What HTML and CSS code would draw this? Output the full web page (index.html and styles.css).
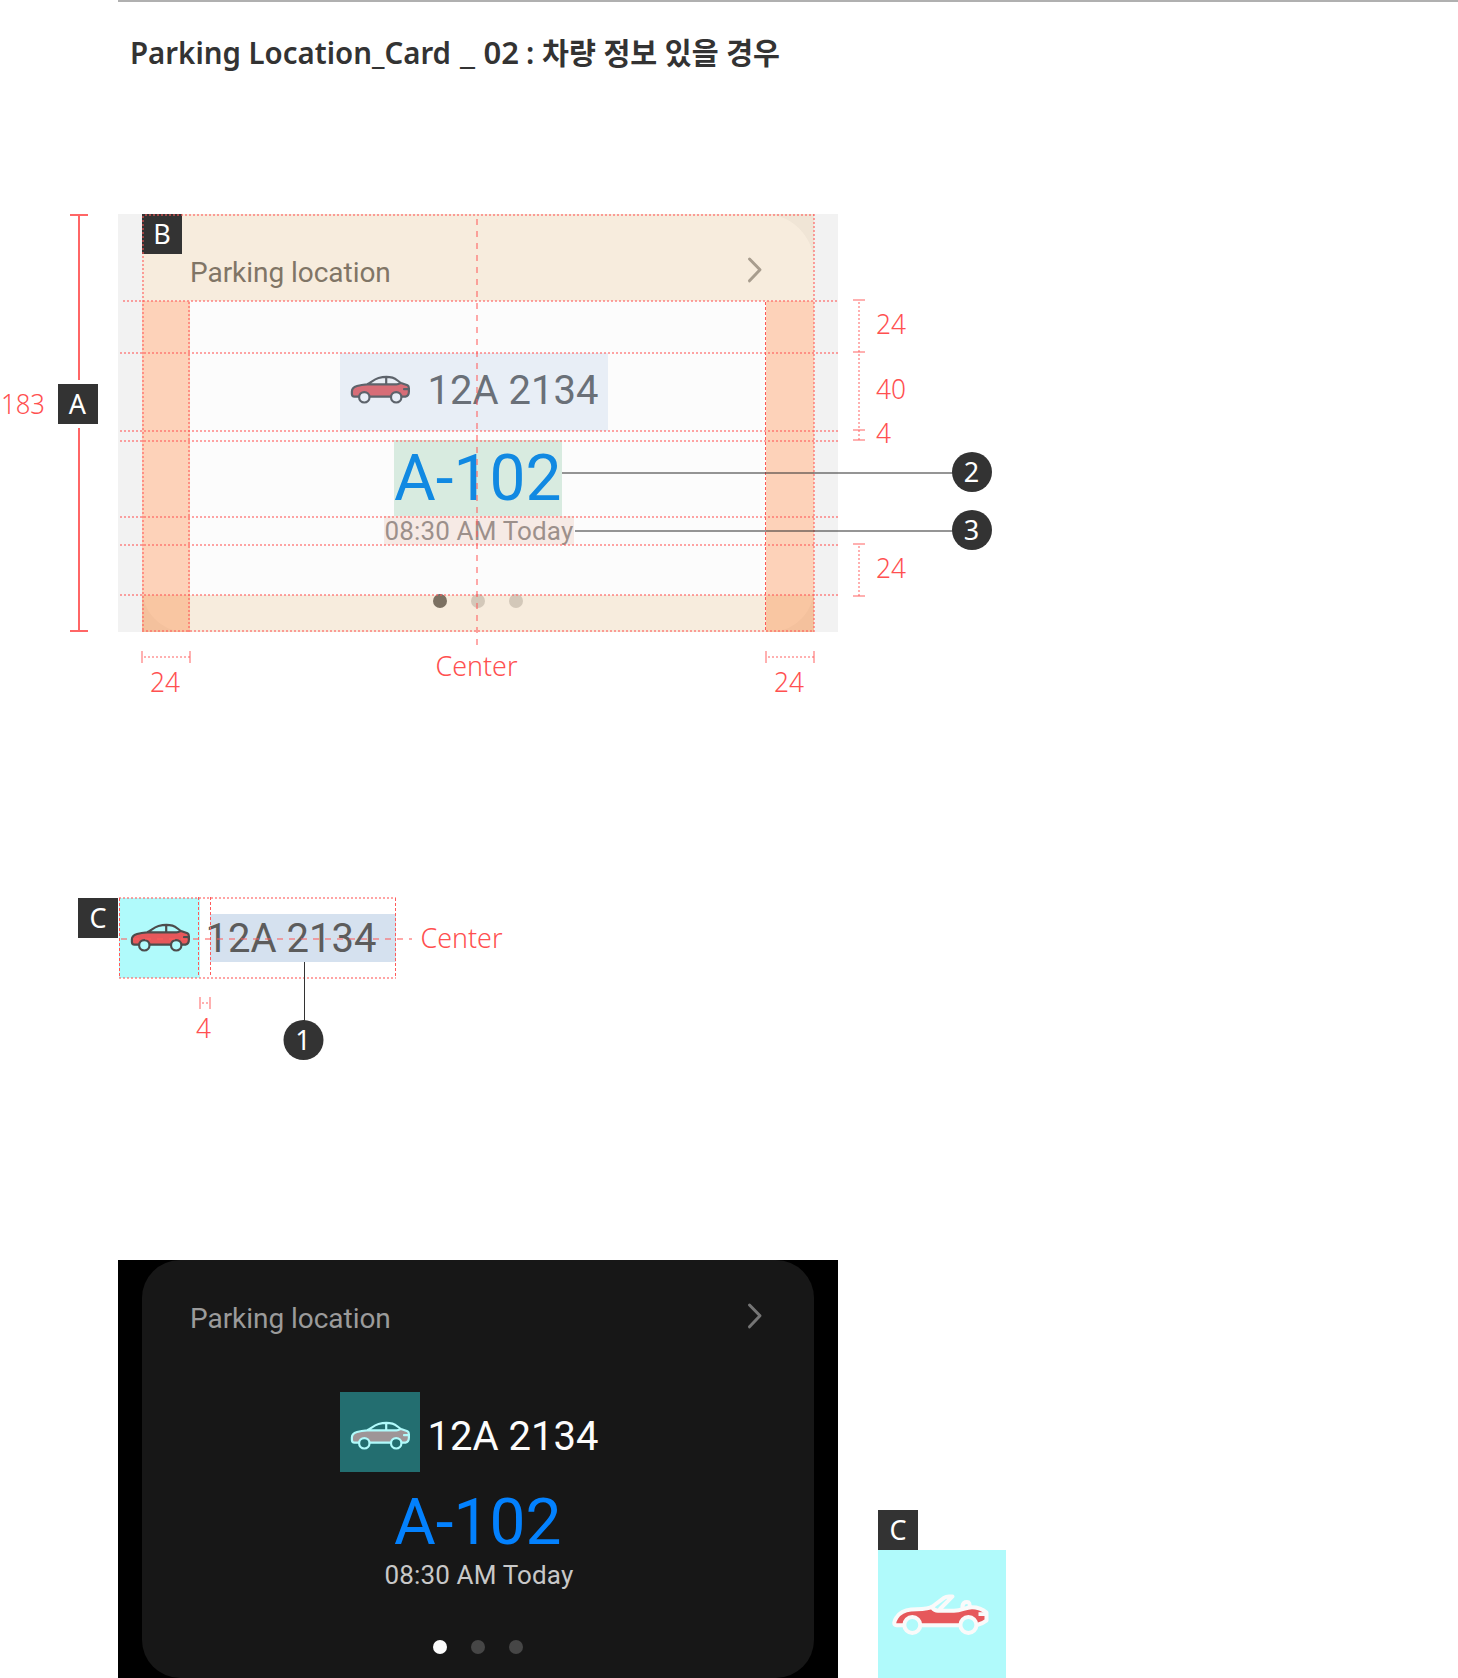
FILE: index.html
```html
<!DOCTYPE html>
<html lang="ko">
<head>
<meta charset="utf-8">
<title>Parking Location Card 02</title>
<link rel="stylesheet" href="styles.css">
</head>
<body>
<svg class="defs" width="0" height="0" aria-hidden="true">
  <symbol id="sedan" viewBox="0 0 80 80">
    <path class="paint" d="M12 50V45.5Q12 41.500 17 40Q22 38.700 27 38.300H57L60.500 36.500L68 39.500L69 42.500V48L66.500 50.500H14Z"/>
    <path class="trim" d="M18.800 50.600H14.500Q11.900 50.600 11.900 48V45.500Q11.900 41.600 17 40Q21.500 38.700 27 38.300C30 37.400 33.500 33.500 38.500 32C43 30.700 49 30.700 52.500 31.600C56 32.600 58.500 35.600 61 37L67.500 39.300Q68.900 40 68.900 42.300V45.500Q68.900 50 65.500 50.600H61.800M29.800 50.600H50.500M27 38.300H56.500Q58.500 38.300 60.600 36.800M46.200 31V38.300M68.500 43.200H64"/>
    <circle class="trim" cx="24.300" cy="51.300" r="5.200"/>
    <circle class="trim" cx="56.200" cy="51.300" r="5.200"/>
  </symbol>
  <symbol id="roadster" viewBox="0 0 128 128">
    <path class="paint" d="M17 74C20 65 26 60 36 60L54 58.500L59 61H79L94 58.500L104 60.500L108 64L107 71L99 75H17Z"/>
    <path class="trim" d="M26 75.300H18.500C15 75.300 16 71 18.500 67.500C22 62 27 60 33 59.500C42 59 50 59.500 54.500 56.500L66 47.800Q68 46.400 71 46.400H74.500L62 59M54.500 58C56 60 57.500 60.600 60 60.700H76C84 60.700 87 57.300 94 57.300C100 57.300 105 59.500 108.500 62.500V70.500Q105 73.500 99 75M43 75.300H82M84.500 58V56Q85 52 89 52Q92.200 52 91.500 56.500"/>
    <circle class="trim" cx="34.300" cy="75" r="8"/>
    <circle class="trim" cx="90.400" cy="75" r="8"/>
    <path class="lamp" d="M100.500 62.200H108V66H100.500Z"/>
  </symbol>
</svg>

<main class="sheet">
  <header class="sheet-head">
    <h1><svg width="680" height="50"><text class="title" x="12" y="34" textLength="321" lengthAdjust="spacingAndGlyphs">Parking Location_Card</text><text class="title" x="342" y="34" textLength="15" lengthAdjust="spacingAndGlyphs">_</text><text class="title" x="365.500" y="34" textLength="35.500" lengthAdjust="spacingAndGlyphs">02</text><text class="title" x="408" y="34">:</text><text class="title" x="424" y="34" textLength="238" lengthAdjust="spacingAndGlyphs">차량 정보 있을 경우</text></svg></h1>
  </header>

  <section class="stage light">
    <article class="card">
      <div class="card-head"><span>Parking location</span><svg class="chevron" width="16" height="28"><path d="M2.500 3L13 13.800L2.500 24.800"/></svg></div>
      <div class="vehicle"><svg class="car" width="80" height="80"><use href="#sedan"/></svg><span class="plate">12A 2134</span></div>
      <div class="spot">A-102</div>
      <div class="time">08:30 AM Today</div>
      <div class="dots"><i class="on"></i><i></i><i></i></div>
    </article>
    <svg class="notes" viewBox="0 0 1040 500" width="1040" height="500">
      <g class="tints">
        <path class="t-beige" d="M142 14H814V101H142ZM142 395H814V432H142Z"/>
        <path class="t-orange" d="M142 101H190V432H142ZM766 101H814V432H766Z"/>
        <path class="t-blue" d="M340 153H608V231H340Z"/>
        <path class="t-green" d="M394 240H562V316H394Z"/>
        <path class="t-pink" d="M384 316H574V345H384Z"/>
      </g>
      <rect class="badge" x="142" y="14" width="40" height="40"/>
      <g class="dotted">
        <path d="M145 15H814M123 101H838M120 153H838M120 231H838M120 241H838M120 317H838M120 345H838M120 395H838M142 431H814"/>
        <path d="M143 16V432M189 102V432M814 14V432"/>
      </g>
      <path class="hair" d="M765.500 102V432"/>
      <path class="dashed" d="M477 19V446"/>
      <g class="leader"><path d="M562 273H953M575 331H953"/></g>
      <path class="solid" d="M70 15H88M79 15V180M79 228V431M70 431H88"/>
      <g class="measure">
        <path d="M853 100H865M853 152H865M853 230H865M853 240H865M853 344H865M853 396H865M142 451V463M190 451V463M766 451V463M814 451V463"/>
        <path class="run" d="M859 102V240M859 346V396M144 457H190M768 457H814"/>
      </g>
      <rect class="badge" x="58" y="184" width="40" height="40"/>
      <circle class="badge" cx="972" cy="272" r="20"/>
      <circle class="badge" cx="972" cy="330" r="20"/>
      <g class="mark">
        <text x="162" y="44">B</text><text x="77.500" y="214">A</text>
        <text x="971.500" y="282">2</text><text x="971.500" y="340">3</text>
      </g>
      <g class="label">
        <text x="1" y="214" textLength="44" lengthAdjust="spacingAndGlyphs">183</text>
        <text x="876" y="134" textLength="30" lengthAdjust="spacingAndGlyphs">24</text>
        <text x="876" y="199" textLength="30" lengthAdjust="spacingAndGlyphs">40</text>
        <text x="876" y="243" textLength="15" lengthAdjust="spacingAndGlyphs">4</text>
        <text x="876" y="378" textLength="30" lengthAdjust="spacingAndGlyphs">24</text>
        <text x="150" y="492" textLength="30" lengthAdjust="spacingAndGlyphs">24</text>
        <text x="774" y="492" textLength="30" lengthAdjust="spacingAndGlyphs">24</text>
        <text x="435.500" y="476" textLength="82" lengthAdjust="spacingAndGlyphs">Center</text>
      </g>
    </svg>
  </section>

  <section class="detail">
    <div class="tag">C</div>
    <div class="tile small"><svg class="car" width="80" height="80"><use href="#sedan"/></svg></div>
    <div class="plate-box"><span class="plate">12A 2134</span></div>
    <svg class="notes" viewBox="0 0 560 190" width="560" height="190">
      <g class="dotted"><path d="M119 18H396M119 98H396"/></g>
      <path class="hair" d="M119.500 18V98M198.500 17V97M210.500 17V97M395.500 18V98"/>
      <path class="dashed" d="M121 59H412"/>
      <g class="measure"><path d="M200 117V129M210 117V129"/><path class="run" d="M202 123H209"/></g>
      <path class="pin" d="M304.500 82V142"/>
      <circle class="badge" cx="303.500" cy="160" r="20"/>
      <g class="mark"><text x="303" y="170">1</text></g>
      <g class="label">
        <text x="420.500" y="68" textLength="82" lengthAdjust="spacingAndGlyphs">Center</text>
        <text x="196" y="157.500" textLength="15" lengthAdjust="spacingAndGlyphs">4</text>
      </g>
    </svg>
  </section>

  <div class="row">
    <section class="stage dark">
      <article class="card">
        <div class="card-head"><span>Parking location</span><svg class="chevron" width="16" height="28"><path d="M2.500 3L13 13.800L2.500 24.800"/></svg></div>
        <div class="vehicle"><svg class="car" width="80" height="80"><use href="#sedan"/></svg><span class="plate">12A 2134</span></div>
        <div class="spot">A-102</div>
        <div class="time">08:30 AM Today</div>
        <div class="dots"><i class="on"></i><i></i><i></i></div>
      </article>
    </section>
    <aside class="sample">
      <div class="tag">C</div>
      <div class="tile large"><svg class="car" width="128" height="128"><use href="#roadster"/></svg></div>
    </aside>
  </div>
</main>
</body>
</html>
```
FILE: styles.css
```css
* { box-sizing: border-box; }
body { margin: 0; background: #fff; font-family: Roboto, "Liberation Sans", sans-serif; }
.defs { display: block; height: 0; }
.sheet { width: 1458px; height: 1678px; overflow: hidden; }

.sheet-head { height: 214px; margin-left: 118px; padding-top: 28px; border-top: 2px solid #b0b0b0; }
h1 { margin: 0; font-size: 30px; line-height: 1; }
h1 svg { display: block; overflow: visible; }
.title { font: 600 30px "Noto Sans", "Noto Sans CJK KR", sans-serif; fill: #333; }

/* Card preview */
.stage { position: relative; width: 720px; height: 418px; margin-left: 118px; padding: 0 24px; background: #f2f2f2; }
.card { height: 418px; border-radius: 44px 50px 44px 44px; background: #fcfcfc; overflow: hidden; display: flex; flex-direction: column; }
.card-head { display: flex; justify-content: space-between; align-items: center; height: 60px; margin-top: 26px; padding: 0 51px 0 48px; font-size: 28px; letter-spacing: -.04px; color: #636363; }
.card-head span { padding-top: 5px; }
.chevron { fill: none; stroke: #969696; stroke-width: 3; stroke-linecap: round; stroke-linejoin: round; }
.vehicle { display: flex; align-items: center; height: 80px; margin: 46px 0 0 198px; }
.car { display: block; flex: none; --trim: #4c4c4c; --paint: #e6585b; --line: 2.200px; }
.plate { font-size: 40px; line-height: 48px; color: #5c5c5c; white-space: nowrap; }
.vehicle .plate { margin: 10px 0 0 7.500px; }
.spot { height: 76px; margin: 15px 0 0 252px; font-size: 64px; line-height: 76px; color: #0381fe; }
.time { height: 30px; margin: -1px 0 0 242.500px; font-size: 26px; line-height: 30px; letter-spacing: .150px; color: #888; }
.dots { display: flex; gap: 24px; margin: 48px 0 0 291px; }
.dots i { width: 14px; height: 14px; border-radius: 50%; background: #cdcdcd; }
.dots .on { background: #5e5e5e; }

.paint { fill: var(--paint); }
.trim { fill: none; stroke: var(--trim); stroke-width: var(--line); stroke-linecap: round; stroke-linejoin: round; }
circle.trim { fill: var(--hub); }
.light .car { --hub: #fcfcfc; }
.lamp { fill: #fafafa; }

.dark { background: #000; }
.dark .card { border-radius: 38px; background: #171717; }
.dark .card-head { color: #9b9b9b; }
.dark .chevron { stroke: #757575; }
.dark .car { --trim: #b0fafb; --paint: #9e9597; --hub: #236e70; background: #236e70; }
.dark .plate { color: #fcfcfc; }
.dark .spot { margin-top: 13px; }
.dark .time { color: #c8c8c8; }
.dark .dots { margin-top: 50px; }
.dark .dots i { background: #464646; }
.dark .dots .on { background: #fcfcfc; }

/* Red-line layer above the artwork */
.notes { position: absolute; left: -118px; top: -14px; overflow: visible; fill: none; }
.t-beige { fill: rgba(230, 184, 116, .22); }
.t-orange { fill: rgba(255, 102, 9, .28); }
.t-blue { fill: rgba(162, 190, 226, .21); }
.t-green { fill: rgba(74, 170, 116, .2); }
.t-pink { fill: rgba(228, 175, 152, .225); }
.dotted { stroke: #ff5a5a; stroke-opacity: .55; stroke-width: 2; stroke-dasharray: 2 2; }
.hair { stroke: #ff5a5a; stroke-width: 1; stroke-dasharray: 3 2; }
.dashed { stroke: #ff5a5a; stroke-opacity: .52; stroke-width: 2; stroke-dasharray: 6 6; }
.solid { stroke: #ff6666; stroke-width: 2; }
.leader { stroke: #333; stroke-opacity: .52; stroke-width: 2; }
.pin { stroke: #333; stroke-width: 1; }
.measure { stroke: #ff5a5a; stroke-opacity: .48; stroke-width: 2; }
.run { stroke-dasharray: 2 2; }
.badge { fill: #333; }
.mark { font: 450 27px "Noto Sans", sans-serif; fill: #fff; text-anchor: middle; }
.label { font: 350 27px "Noto Sans", sans-serif; fill: #ff5050; }

/* Icon and plate detail */
.detail { position: relative; display: flex; height: 80px; margin: 266px 0 0 78px; }
.detail .notes { left: -78px; top: -18px; }
.tag { flex: none; width: 40px; height: 40px; background: #333; color: #fff; font: 450 27px/39px "Noto Sans", sans-serif; text-align: center; }
.tile { background: #b0fafb; }
.small { width: 81px; margin-left: 1px; padding-left: 1px; }
.small .car { margin-top: -4px; --hub: #b0fafb; }
.plate-box { width: 186px; height: 48px; margin: 16px 0 0 10px; background: #d5e1ef; }
.plate-box .plate { display: block; margin: 1px 0 0 -4.500px; }

.row { display: flex; align-items: flex-end; gap: 40px; margin-top: 282px; }
.large { width: 128px; height: 128px; }
.large .car { --trim: #fafafa; --hub: #b0fafb; --line: 4px; }
```
